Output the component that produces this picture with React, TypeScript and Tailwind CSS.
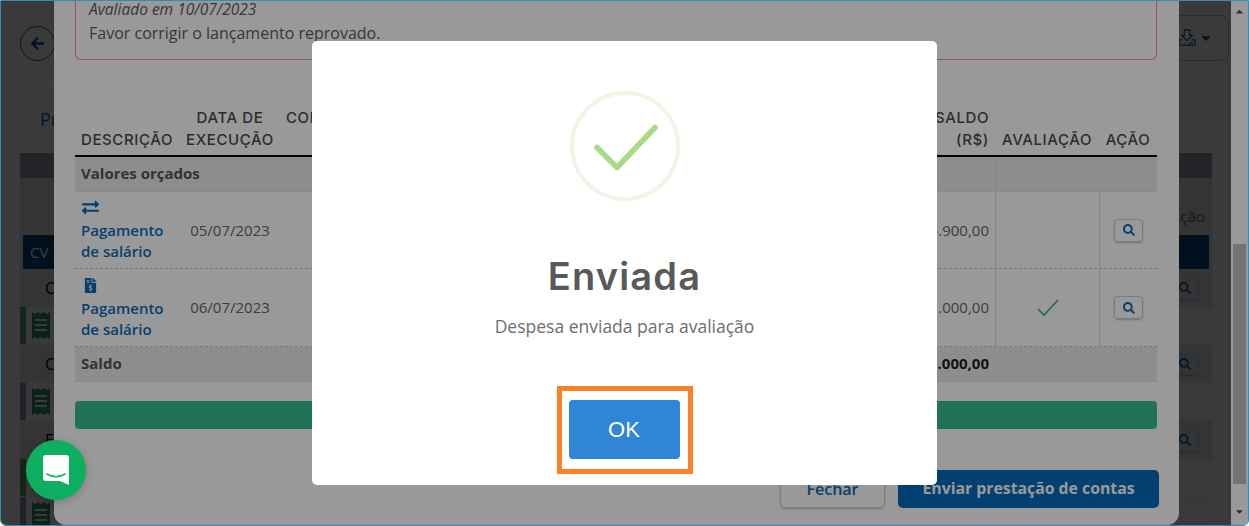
import { FaArrowLeft, FaCaretDown, FaCaretUp, FaExchangeAlt, FaFileInvoiceDollar, FaSearch } from "react-icons/fa";

const bgRows = [
  { letter: "C" },
  { accent: "bg-[#5d9a6b]" },
  { letter: "C" },
  { accent: "bg-[#7f93ad]" },
  { letter: "E" },
  { accent: "bg-[#5d9a6b]" },
  { accent: "bg-[#7f93ad]" },
];

const gridCols = "grid grid-cols-[105px_100px_1fr_104px_58px]";

function SearchButton() {
  return (
    <button className="flex h-[23px] w-[29px] items-center justify-center rounded-[4px] border border-[#b5d3ee] text-[#0a6cb8] shadow-[0_1px_2px_rgba(0,0,0,0.25)]">
      <FaSearch size={12} />
    </button>
  );
}

// recibo com bordas serrilhadas da lista de fundo
function ReceiptIcon() {
  return (
    <svg viewBox="0 0 18 27" className="ml-[6px] mt-[5px] h-[27px] w-[18px] text-[#2f8f66]">
      <path
        d="M0 0l3 2 3-2 3 2 3-2 3 2 3-2v27l-3-2-3 2-3-2-3 2-3-2-3 2zM3 7v2h12V7zm0 5v2h12v-2zm0 5v2h12v-2z"
        fill="currentColor"
        fillRule="evenodd"
      />
    </svg>
  );
}

function BackgroundPage() {
  return (
    <div className="flex h-full w-[1230px] flex-col bg-[#f2f2f2] font-['Open_Sans',sans-serif]">
      {/* cabecalho */}
      <div className="flex h-[86px] shrink-0 justify-between border-b border-[#ffffff] pl-[19px] pr-[2px]">
        <div className="mt-[25px] flex h-[35px] w-[35px] items-center justify-center rounded-full border border-[#0a6cb8] text-[#0a4a80]">
          <FaArrowLeft size={15} />
        </div>
        <div className="mt-[14px] flex h-[46px] w-[60px] items-center justify-end gap-[3px] rounded-[8px] border border-[#9cc5e6] pr-[15px] text-[#0a5a9c]">
          <svg viewBox="0 0 20 20" className="h-[18px] w-[18px]" fill="none" stroke="currentColor" strokeWidth="1.3">
            <path d="M7 1h6v6h3l-6 6-6-6h3z" />
            <path d="M1 12v6h18v-6h-4M1 12h4" />
            <path d="M12 15.5h5" />
          </svg>
          <FaCaretDown size={14} />
        </div>
      </div>
      {/* abas */}
      <div className="flex h-[66px] shrink-0 items-center border-b border-[#ffffff] pl-[39px] text-[18px] text-[#0a6cb8]">Prestação</div>
      {/* painel */}
      <div className="ml-[19px] min-h-0 w-[1192px] flex-1 overflow-hidden bg-[#dcdcdc]">
        <div className="h-[25px] bg-[#8e99a7]" />
        <div className="flex h-[57px] items-end justify-end pb-[8px] pr-[7px] text-[15px] text-[#666666]">Ação</div>
        <div className="mx-[3px] flex h-[34px] items-center bg-[#00487f] pl-[7px] text-[15px] text-white">CV</div>
        {bgRows.map((row, i) => (
          <div key={i} className="flex h-[38px] items-center border-b border-[#e4e4e4]">
            {row.letter ? (
              <>
                <span className="ml-[25px] text-[16px] text-black">{row.letter}</span>
                <div className="ml-auto mr-[13px]">
                  <SearchButton />
                </div>
              </>
            ) : (
              <div className="flex h-full w-full bg-[#f0f0f0]">
                <div className={`h-full w-[6px] ${row.accent}`} />
                <ReceiptIcon />
              </div>
            )}
          </div>
        ))}
      </div>
    </div>
  );
}

function ExpenseModal() {
  return (
    <div className="flex h-full w-[1125px] flex-col rounded-b-[12px] bg-white pl-[21px] pr-[20px] font-['Open_Sans',sans-serif] text-[15px] text-[#666666]">
      <div className="mr-[2px] h-[59px] rounded-b-[6px] border border-t-0 border-[#ff8e8e] px-[13px] text-[#5c5c5c]">
        <p className="h-[16px] text-[15.5px] italic leading-[16px]">Avaliado em 10/07/2023</p>
        <p className="mt-[6px] text-[16px] leading-[20px]">Favor corrigir o lançamento reprovado.</p>
      </div>

      <div className="mr-[2px] mt-[47px]">
        <div className={`${gridCols} h-[50px] items-end border-b-2 border-black pb-[8px] font-['Inter',sans-serif] text-[15px] font-medium leading-[22px] tracking-[0.6px] text-[#4a4a4a]`}>
          <div className="pl-[6px]">DESCRIÇÃO</div>
          <div className="text-center">DATA DE<br />EXECUÇÃO</div>
          <div className="flex items-end justify-between pl-[6px] pr-[6px]">
            <span className="self-start">CONTA</span>
            <span className="text-right">SALDO<br />(R$)</span>
          </div>
          <div className="text-center">AVALIAÇÃO</div>
          <div className="text-center">AÇÃO</div>
        </div>

        <div className={`${gridCols} h-[35px] border-b border-[#d4e4f5] bg-[#ebebeb] font-bold text-[#555555]`}>
          <div className="col-span-3 flex items-center pb-[2px] pl-[6px]">Valores orçados</div>
          <div className="border-l border-[#d4e4f5]" />
        </div>

        <div className={`${gridCols} h-[77px] border-b border-dashed border-[#bcc8d4]`}>
          <div className="pl-[6px] pt-[7px] font-semibold leading-[21px] text-[#0a6cb8]">
            <FaExchangeAlt size={17} className="ml-[1px] h-[17px]" />
            <div className="mt-[4px]">Pagamento<br />de salário</div>
          </div>
          <div className="self-center text-center">05/07/2023</div>
          <div className="self-center pr-[6px] text-right">5.900,00</div>
          <div className="border-l border-[#d4e4f5]" />
          <div className="flex items-center justify-center border-l border-[#d4e4f5]"><SearchButton /></div>
        </div>

        <div className={`${gridCols} h-[78px] border-b border-dashed border-[#bcc8d4]`}>
          <div className="pl-[6px] pt-[9px] font-semibold leading-[21px] text-[#0a6cb8]">
            <FaFileInvoiceDollar size={15} className="ml-[2px] h-[15px]" />
            <div className="mt-[5px]">Pagamento<br />de salário</div>
          </div>
          <div className="self-center text-center">06/07/2023</div>
          <div className="self-center pr-[6px] text-right">1.000,00</div>
          <div className="flex items-center justify-center border-l border-[#d4e4f5]">
            <svg viewBox="0 0 22 18" className="h-[18px] w-[22px]" fill="none" stroke="#3fae88" strokeWidth="1.6">
              <path d="M1 10l6 6L21 1" />
            </svg>
          </div>
          <div className="flex items-center justify-center border-l border-[#d4e4f5]"><SearchButton /></div>
        </div>

        <div className="flex h-[35px] items-center justify-between border-b border-[#d4e4f5] bg-[#ebebeb] pb-[2px] pl-[6px] pr-[168px] font-bold text-[#555555]">
          <span>Saldo</span>
          <span className="text-[#1f1f1f]">1.000,00</span>
        </div>
      </div>

      <div className="mr-[2px] mt-[19px] h-[28px] rounded-[4px] bg-[#37bb93]" />

      <div className="mt-[41px] flex justify-end gap-[13px]">
        <button className="h-[38px] w-[105px] rounded-[5px] border border-[#b5d3ee] text-[16px] font-semibold text-[#0a6cb8] shadow-[0_1px_2px_rgba(0,0,0,0.25)]">Fechar</button>
        <button className="h-[38px] w-[261px] rounded-[5px] bg-[#036cbb] text-[15.8px] font-bold text-white">Enviar prestação de contas</button>
      </div>
    </div>
  );
}

function Scrollbar() {
  return (
    <div className="flex h-full w-[17px] flex-col items-center bg-white text-[#505050]">
      <FaCaretUp size={11} className="mt-[5px]" />
      <div className="mt-[227px] h-[240px] w-[13px] bg-[#c1c1c1]" />
      <FaCaretDown size={11} className="mt-[22px]" />
    </div>
  );
}

function SuccessDialog() {
  return (
    <div className="flex h-[444px] w-[625px] flex-col items-center rounded-[5px] bg-white pt-[50px]">
      <div className="flex h-[110px] w-[110px] items-center justify-center rounded-full border-4 border-[#edf7e6]">
        <svg viewBox="0 0 64 46" className="mt-[3px] h-[46px] w-[64px] overflow-visible" fill="none" stroke="#a5dc86" strokeWidth="5.5" strokeLinecap="round" strokeLinejoin="round">
          <path d="M4 22.5L24 42.5L62 2.5" />
        </svg>
      </div>
      <h2 className="mt-[53px] font-['Inter',sans-serif] text-[38px] font-semibold leading-[44px] tracking-[1.2px] text-[#595959]">Enviada</h2>
      <p className="mt-[16px] font-['Open_Sans',sans-serif] text-[17.5px] leading-[24px] text-[#6e6e6e]">Despesa enviada para avaliação</p>
      <div className="mt-[48px] border-[5px] border-[#ff7f27] pb-[10px] pl-[7px] pr-[8px] pt-[9px]">
        <button className="h-[59px] w-[111px] rounded-[4px] bg-[#3085d6] font-['Liberation_Sans',sans-serif] text-[22px] text-white">OK</button>
      </div>
    </div>
  );
}

function ChatBubble() {
  return (
    <div className="absolute bottom-[25px] left-[25px] flex h-[60px] w-[60px] items-center justify-center rounded-full bg-[#0eae60] shadow-[0_2px_8px_rgba(0,0,0,0.2)]">
      <svg viewBox="0 0 26 30" className="h-[30px] w-[26px]">
        <path d="M3 0h20a3 3 0 0 1 3 3v27l-9-4H3a3 3 0 0 1-3-3V3a3 3 0 0 1 3-3z" fill="#fff" />
        <path d="M4 19c5.500 3.500 12.500 3.500 18 0" fill="none" stroke="#0eae60" strokeWidth="1.6" strokeLinecap="round" />
      </svg>
    </div>
  );
}

export default function App() {
  return (
    <div className="relative h-[526px] w-[1249px] overflow-hidden rounded-b-[6px] border border-[#2f8fb5]">
      <div className="absolute inset-0">
        <BackgroundPage />
      </div>
      <div className="absolute inset-0 bg-black/60" />
      <div className="absolute inset-0 flex justify-between pl-[53px]">
        <ExpenseModal />
        <Scrollbar />
      </div>
      <div className="absolute inset-0 flex justify-center bg-[rgba(0,0,0,0.4)] pt-[40px]">
        <SuccessDialog />
      </div>
      <ChatBubble />
    </div>
  );
}
